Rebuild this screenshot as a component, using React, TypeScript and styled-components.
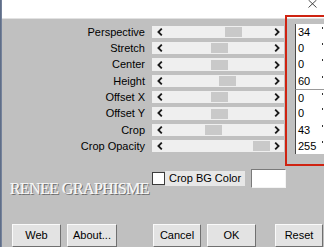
import React from "react";
import styled, { createGlobalStyle } from "styled-components";

const Global = createGlobalStyle`
  html, body { margin: 0; padding: 0; background: #c0c0c0; }
  body {
    width: 324px; height: 247px; overflow: hidden;
    font-family: "Liberation Sans", Arial, sans-serif;
  }
`;

const Window = styled.div`
  position: relative;
  display: flex;
  width: 324px;
  height: 247px;
  overflow: hidden;
`;

const Edge = styled.div`
  width: 2px;
  flex: none;
  background: linear-gradient(to right, #55647e, #7e8ba4);
`;

const Main = styled.div`
  flex: 1;
  display: flex;
  flex-direction: column;
  background: #c0c0c0;
`;

const TitleBar = styled.div`
  height: 19px;
  background: #ffffff;
  border-bottom: 1px solid #e2e2e2;
  display: flex;
  justify-content: flex-end;
  align-items: flex-start;
  padding-right: 7px;
`;

const Body = styled.div`
  display: flex;
  flex-direction: column;
  padding-top: 4.7px;
`;

const Rows = styled.div`
  display: grid;
  grid-template-columns: 143px 139px 40px;
  grid-auto-rows: 16.33px;
`;

const Label = styled.div`
  font-size: 11px;
  line-height: 16.33px;
  text-align: right;
  color: #000;
  white-space: nowrap;
`;

const SliderCell = styled.div`
  padding-left: 7px;
  display: flex;
  align-items: center;
`;

const Track = styled.div`
  position: relative;
  width: 132px;
  height: 12.5px;
  background: #efefef;
  display: flex;
  align-items: center;
  justify-content: space-between;
  padding: 0 4px 0 5px;
  box-sizing: border-box;
`;

const Thumb = styled.div`
  position: absolute;
  top: 1.5px;
  width: 17px;
  height: 10px;
  background: #c9c9c9;
`;

const Field = styled.div<{ $divider?: boolean }>`
  margin-left: 11px;
  background: #ffffff;
  border-left: 1px solid #4a4a4a;
  border-top: ${(p) => (p.$divider ? "1px solid #9a9a9a" : "none")};
  font-size: 11px;
  line-height: 16.33px;
  padding-left: 2px;
  color: #000;
  position: relative;
  box-sizing: border-box;
`;

const SpinDot = styled.span`
  position: absolute;
  right: 1px;
  top: 3px;
  width: 1px;
  height: 2px;
  background: #333;
`;

const RedBox = styled.div`
  position: absolute;
  left: 285px;
  top: 15px;
  width: 50px;
  height: 151px;
  border: 2px solid #cf2311;
  box-sizing: border-box;
  pointer-events: none;
`;

const Options = styled.div`
  margin-top: 14.7px;
  display: grid;
  grid-template-columns: 150px auto;
  height: 19px;
`;

const Logo = styled.div`
  padding-left: 8px;
  padding-top: 12px;
  font-family: "Liberation Serif", "Times New Roman", serif;
  font-size: 16px;
  line-height: 16px;
  letter-spacing: -0.6px;
  color: #f7f7f7;
  text-shadow: 1px 1px 0 #6d6d6d, -0.5px -0.5px 0 #e8e8e8;
  white-space: nowrap;
`;

const CropGroup = styled.div`
  display: flex;
  align-items: flex-start;
`;

const CheckBox = styled.div`
  margin-top: 3px;
  width: 13px;
  height: 13px;
  box-sizing: border-box;
  background: #fff;
  border: 1px solid #3c3c3c;
`;

const CheckLabel = styled.div`
  margin-top: 2px;
  width: 80px;
  height: 15px;
  box-sizing: border-box;
  padding-left: 4px;
  background: #e7e7e7;
  font-size: 11px;
  line-height: 15px;
  color: #000;
  white-space: nowrap;
`;

const Swatch = styled.div`
  margin-left: 6px;
  width: 35px;
  height: 19px;
  box-sizing: border-box;
  background: #fff;
  border-style: solid;
  border-width: 1px;
  border-color: #7a7a7a #f4f4f4 #f4f4f4 #7a7a7a;
`;

const ButtonRow = styled.div`
  margin-top: 36px;
  display: flex;
  justify-content: space-between;
  padding: 0 1px 0 10px;
`;

const ButtonGroup = styled.div`
  display: flex;
`;

const Button = styled.div<{ $w: number; $gap?: number }>`
  width: ${(p) => p.$w}px;
  margin-left: ${(p) => p.$gap ?? 0}px;
  height: 23px;
  box-sizing: border-box;
  background: #e3e3e3;
  border-style: solid;
  border-width: 1px;
  border-color: #fafafa #707070 #707070 #fafafa;
  font-size: 11px;
  line-height: 21px;
  text-align: center;
  color: #000;
`;

const rows = [
  { label: "Perspective", value: "34", thumb: 73 },
  { label: "Stretch", value: "0", thumb: 59 },
  { label: "Center", value: "0", thumb: 59 },
  { label: "Height", value: "60", thumb: 67 },
  { label: "Offset X", value: "0", thumb: 59 },
  { label: "Offset Y", value: "0", thumb: 59 },
  { label: "Crop", value: "43", thumb: 53 },
  { label: "Crop Opacity", value: "255", thumb: 101 },
];

const Chevron = ({ dir }: { dir: "left" | "right" }) => (
  <svg width="6" height="8" viewBox="0 0 6 8" style={{ position: "relative", zIndex: 1 }}>
    <path
      d={dir === "left" ? "M4.8 0.6 L1.4 4 L4.8 7.4" : "M1.2 0.6 L4.6 4 L1.2 7.4"}
      fill="none"
      stroke="#1a1a1a"
      strokeWidth="1.8"
    />
  </svg>
);

const CloseIcon = () => (
  <svg width="9" height="8" viewBox="0 0 9 8">
    <path d="M0.5 0 L8.5 7.5 M8.5 0 L0.5 7.5" stroke="#333" strokeWidth="0.9" fill="none" />
  </svg>
);

export default function App() {
  return (
    <>
      <Global />
      <Window>
        <Edge />
        <Main>
          <TitleBar>
            <CloseIcon />
          </TitleBar>
          <Body>
            <Rows>
              {rows.map((r, i) => (
                <React.Fragment key={r.label}>
                  <Label>{r.label}</Label>
                  <SliderCell>
                    <Track>
                      <Chevron dir="left" />
                      <Thumb style={{ left: r.thumb }} />
                      <Chevron dir="right" />
                    </Track>
                  </SliderCell>
                  <Field $divider={i === 4}>
                    {r.value}
                    <SpinDot />
                  </Field>
                </React.Fragment>
              ))}
            </Rows>
            <Options>
              <Logo>RENEE GRAPHISME</Logo>
              <CropGroup>
                <CheckBox />
                <CheckLabel>Crop BG Color</CheckLabel>
                <Swatch />
              </CropGroup>
            </Options>
            <ButtonRow>
              <ButtonGroup>
                <Button $w={49}>Web</Button>
                <Button $w={50} $gap={6}>About...</Button>
              </ButtonGroup>
              <ButtonGroup>
                <Button $w={48}>Cancel</Button>
                <Button $w={49} $gap={6}>OK</Button>
                <Button $w={48} $gap={19}>Reset</Button>
              </ButtonGroup>
            </ButtonRow>
          </Body>
        </Main>
        <RedBox />
      </Window>
    </>
  );
}
